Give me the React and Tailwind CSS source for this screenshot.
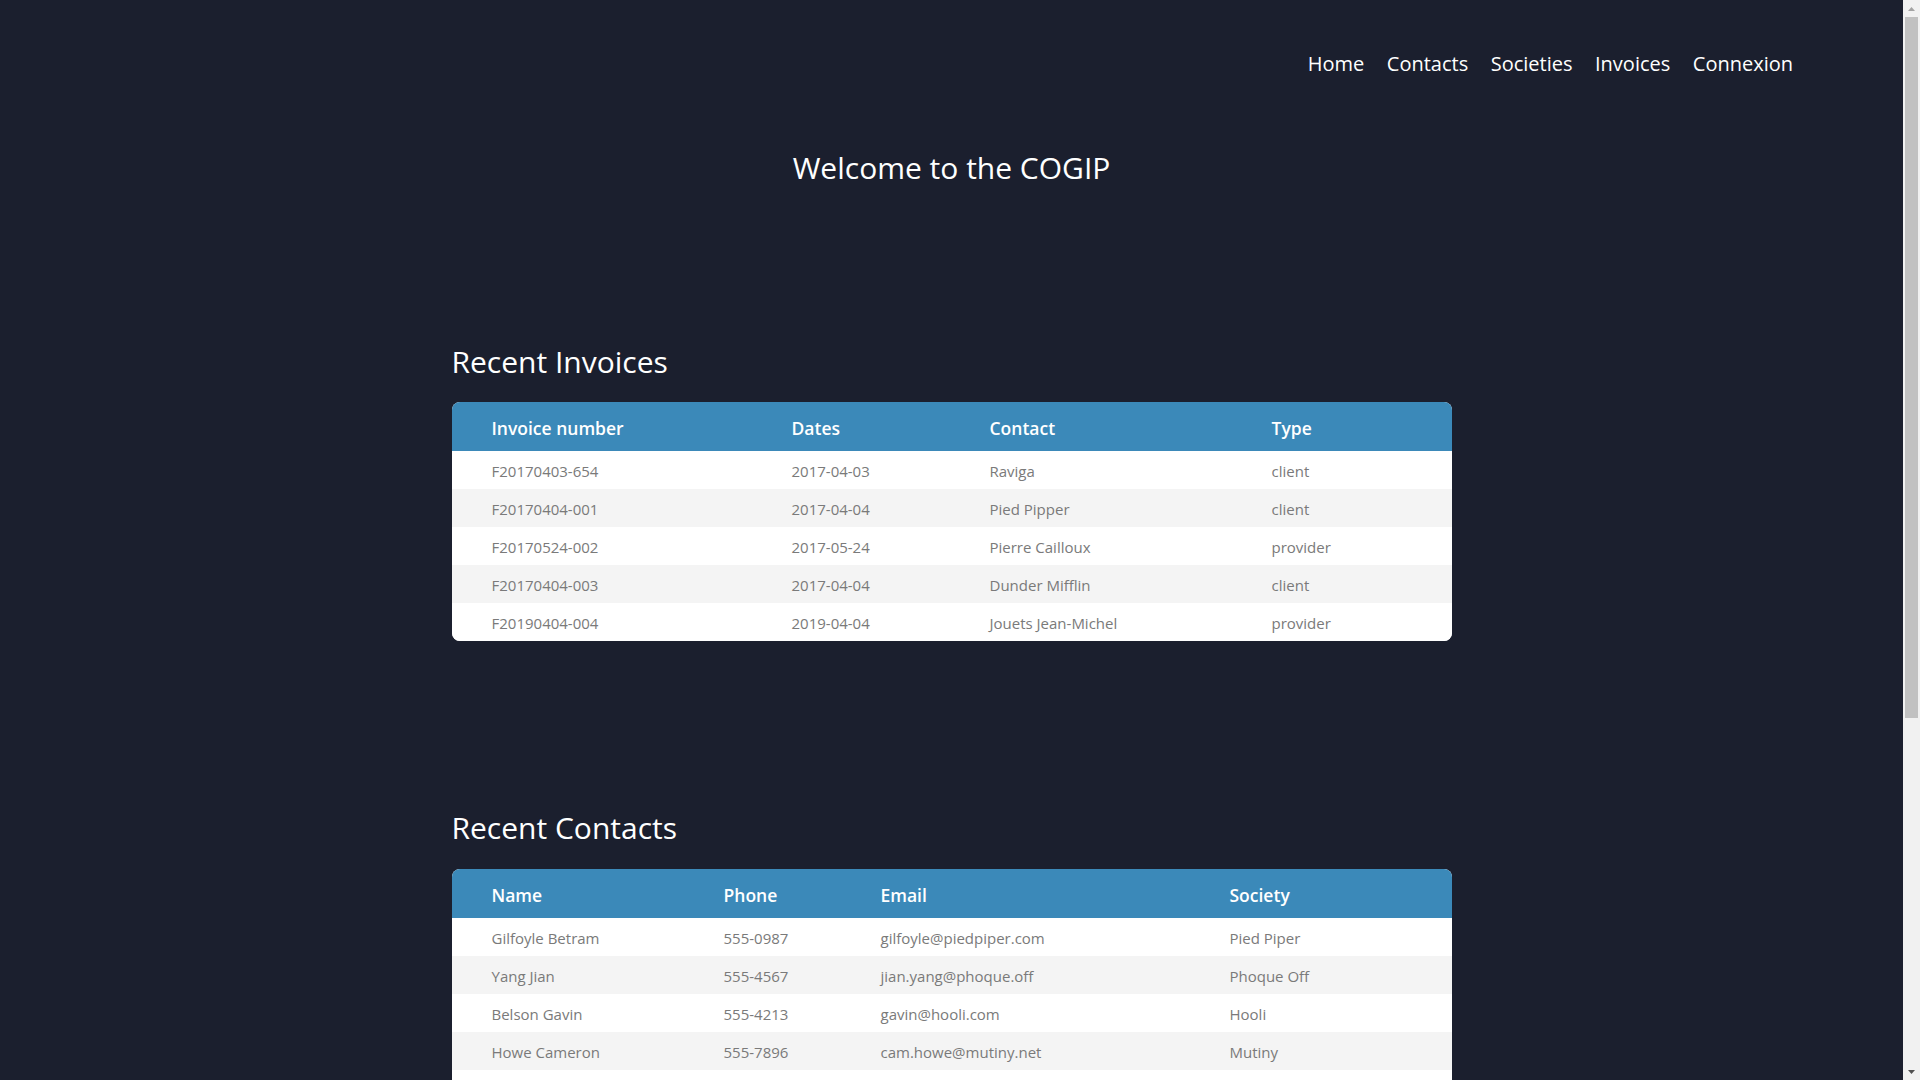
import React from "react";

const invoices = [
  ["F20170403-654", "2017-04-03", "Raviga", "client"],
  ["F20170404-001", "2017-04-04", "Pied Pipper", "client"],
  ["F20170524-002", "2017-05-24", "Pierre Cailloux", "provider"],
  ["F20170404-003", "2017-04-04", "Dunder Mifflin", "client"],
  ["F20190404-004", "2019-04-04", "Jouets Jean-Michel", "provider"],
];

const contacts = [
  ["Gilfoyle Betram", "555-0987", "gilfoyle@piedpiper.com", "Pied Piper"],
  ["Yang Jian", "555-4567", "jian.yang@phoque.off", "Phoque Off"],
  ["Belson Gavin", "555-4213", "gavin@hooli.com", "Hooli"],
  ["Howe Cameron", "555-7896", "cam.howe@mutiny.net", "Mutiny"],
  ["Bertram Dinesh", "555-3344", "dinesh@piedpiper.com", "Pied Piper"],
];

function DataTable({ headers, widths, rows }) {
  return (
    <div className="w-[1000px] mx-auto rounded-lg overflow-hidden bg-white">
      <table className="w-full table-fixed border-collapse">
        <colgroup>
          {widths.map((w, i) => (
            <col key={i} style={{ width: w }} />
          ))}
        </colgroup>
        <thead>
          <tr className="bg-[#3b89b9] h-[49px]">
            {headers.map((h) => (
              <th
                key={h}
                className="text-left pl-10 text-white text-[17.5px] font-semibold leading-[24px] p-0 pt-[2px]"
              >
                {h}
              </th>
            ))}
          </tr>
        </thead>
        <tbody>
          {rows.map((r, i) => (
            <tr
              key={i}
              className={i % 2 === 0 ? "bg-white h-[38px]" : "bg-[#f4f4f4] h-[38px]"}
            >
              {r.map((c, j) => (
                <td
                  key={j}
                  className="pl-10 p-0 pt-[2px] text-[15px] leading-[20px] text-[#7a7a7a] whitespace-nowrap"
                >
                  {c}
                </td>
              ))}
            </tr>
          ))}
        </tbody>
      </table>
    </div>
  );
}

export default function App() {
  return (
    <div
      className="h-screen w-full flex overflow-hidden bg-[#1b1f2e]"
      style={{ fontFamily: "'Open Sans', 'Noto Sans', sans-serif" }}
    >
      <main className="flex-1 h-screen overflow-hidden">
        <nav className="flex justify-end gap-[22.5px] pr-[110px] pt-[49px] text-[20px] leading-[30px] text-white">
          <a>Home</a>
          <a>Contacts</a>
          <a>Societies</a>
          <a>Invoices</a>
          <a>Connexion</a>
        </nav>
        <h1 className="mt-[66px] text-center text-white text-[30px] leading-[45px] font-normal">
          Welcome to the COGIP
        </h1>

        <section className="mt-[149px]">
          <div className="w-[1000px] mx-auto">
            <h2 className="text-white text-[30px] leading-[45px] font-normal mb-[18px]">
              Recent Invoices
            </h2>
          </div>
          <DataTable
            headers={["Invoice number", "Dates", "Contact", "Type"]}
            widths={["300px", "198px", "282px", "220px"]}
            rows={invoices}
          />
        </section>

        <section className="mt-[164px]">
          <div className="w-[1000px] mx-auto">
            <h2 className="text-white text-[30px] leading-[45px] font-normal mb-[19px]">
              Recent Contacts
            </h2>
          </div>
          <DataTable
            headers={["Name", "Phone", "Email", "Society"]}
            widths={["232px", "157px", "349px", "262px"]}
            rows={contacts}
          />
        </section>
      </main>

      <aside className="w-[17px] h-screen bg-[#f1f1f1] flex flex-col shrink-0">
        <div className="h-[17px] flex items-center justify-center">
          <svg width="9" height="6" viewBox="0 0 9 6">
            <polygon points="4.5,1 8,5 1,5" fill="#a3a3a3" />
          </svg>
        </div>
        <div className="flex-1 px-[2px]">
          <div className="h-[701px] bg-[#c1c1c1]" />
        </div>
        <div className="h-[17px] flex items-center justify-center">
          <svg width="9" height="6" viewBox="0 0 9 6">
            <polygon points="1,1 8,1 4.5,5" fill="#505050" />
          </svg>
        </div>
      </aside>
    </div>
  );
}
